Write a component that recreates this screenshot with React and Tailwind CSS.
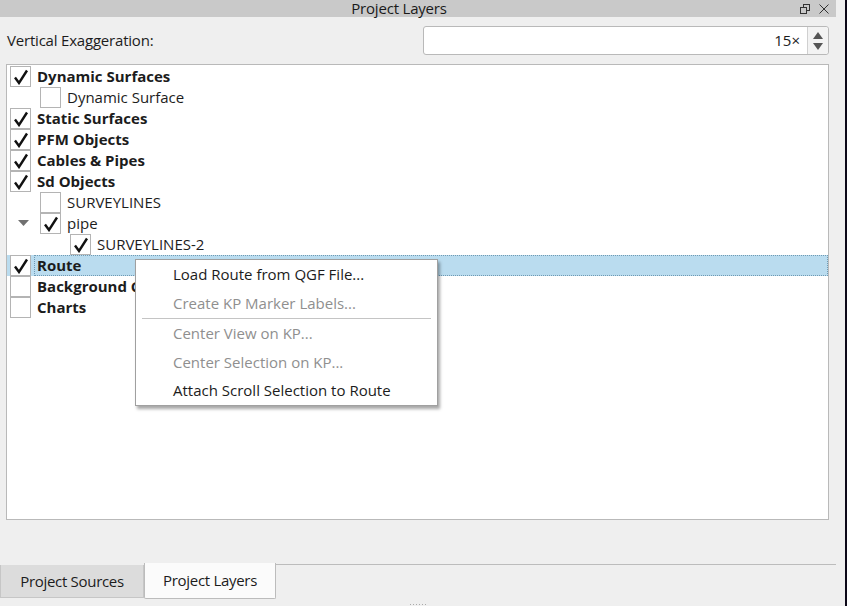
import { useState } from 'react'

const ROWS = [
  { label: 'Dynamic Surfaces', level: 0, checked: true, bold: true },
  { label: 'Dynamic Surface', level: 1, checked: false },
  { label: 'Static Surfaces', level: 0, checked: true, bold: true },
  { label: 'PFM Objects', level: 0, checked: true, bold: true },
  { label: 'Cables & Pipes', level: 0, checked: true, bold: true },
  { label: 'Sd Objects', level: 0, checked: true, bold: true },
  { label: 'SURVEYLINES', level: 1, checked: false },
  { label: 'pipe', level: 1, checked: true, expander: true },
  { label: 'SURVEYLINES-2', level: 2, checked: true },
  { label: 'Route', level: 0, checked: true, bold: true, selected: true },
  { label: 'Background Charts', level: 0, checked: false, bold: true },
  { label: 'Charts', level: 0, checked: false, bold: true },
]

const MENU = [
  { label: 'Load Route from QGF File...' },
  { label: 'Create KP Marker Labels...', disabled: true },
  { sep: true },
  { label: 'Center View on KP...', disabled: true },
  { label: 'Center Selection on KP...', disabled: true },
  { label: 'Attach Scroll Selection to Route' },
]

function CheckBox({ checked }) {
  return (
    <span className="w-[21px] h-[21px] shrink-0 border border-[#b4b4b4] bg-white flex items-center justify-center">
      {checked && (
        <svg width="16" height="16" viewBox="0 0 16 16">
          <path d="M2 8.5 L6 14 L14 1.5" fill="none" stroke="#111" strokeWidth="2.4" strokeLinejoin="miter" />
        </svg>
      )}
    </span>
  )
}

function TreeRow({ row }) {
  const indent = row.level === 0 ? 'pl-[3px]' : row.level === 1 ? 'pl-[33px]' : 'pl-[63px]'
  return (
    <div className={`relative h-[21px] flex items-center ${indent} ${row.selected ? 'bg-[#badcef]' : ''}`}>
      {row.expander && (
        <svg className="absolute left-[11px] top-[7px]" width="11" height="7" viewBox="0 0 11 7">
          <path d="M0 0 L11 0 L5.5 6 Z" fill="#707070" />
        </svg>
      )}
      <CheckBox checked={row.checked} />
      {row.selected ? (
        <span className="ml-[3px] flex-1 h-[21px] border border-dotted border-[#6f9ab3] pl-[2px] whitespace-nowrap text-[15px] leading-[19px] text-[#1c1c1c] font-bold">
          {row.label}
        </span>
      ) : (
        <span className={`ml-[6px] whitespace-nowrap text-[15px] leading-[21px] text-[#1c1c1c] ${row.bold ? 'font-bold' : ''}`}>
          {row.label}
        </span>
      )}
    </div>
  )
}

export default function App() {
  const [value] = useState(15)
  return (
    <div className="w-[847px] h-[606px] bg-[#efefef] relative overflow-hidden flex flex-col" style={{ fontFamily: '"Open Sans", "Noto Sans", sans-serif' }}>
      <div className="flex flex-1 min-h-0">
        <div className="w-[836px] flex flex-col">
          {/* title bar */}
          <div className="h-[17px] bg-[#c9c9c9] relative flex items-center justify-center pr-[38px]">
            <span className="text-[15px] leading-none text-[#1a1a1a] tracking-[-0.2px]">Project Layers</span>
            <div className="absolute right-[7px] top-0 h-[17px] flex items-center gap-[9px]">
              <svg width="10" height="10" viewBox="0 0 10 10">
                <rect x="3.5" y="0.5" width="6" height="6" fill="none" stroke="#333" />
                <rect x="0.5" y="3.5" width="6" height="6" fill="#c9c9c9" stroke="#333" />
              </svg>
              <svg width="10" height="10" viewBox="0 0 10 10">
                <path d="M0.5 0.5 L9.5 9.5 M9.5 0.5 L0.5 9.5" stroke="#333" strokeWidth="1" />
              </svg>
            </div>
          </div>

          {/* vertical exaggeration */}
          <div className="h-[47px] flex items-center pl-[7px] pr-[7px]">
            <span className="text-[15px] text-[#1c1c1c] flex-1 tracking-[-0.2px]">Vertical Exaggeration:</span>
            <div className="w-[406px] h-[29px] bg-white border border-[#b9b9b9] rounded-[3px] flex items-stretch">
              <span className="flex-1 text-right pr-[7px] text-[15px] leading-[27px] text-[#1c1c1c]">{value}×</span>
              <div className="w-[21px] border-l border-[#d0d0d0] bg-[#f3f3f3] flex flex-col items-center justify-center gap-[4px] rounded-r-[3px]">
                <svg width="10" height="7" viewBox="0 0 10 7"><path d="M0 7 L5 0 L10 7 Z" fill="#555" /></svg>
                <svg width="10" height="7" viewBox="0 0 10 7"><path d="M0 0 L5 7 L10 0 Z" fill="#555" /></svg>
              </div>
            </div>
          </div>

          {/* tree */}
          <div className="ml-[6px] mr-[7px] h-[456px] bg-white border border-[#b9b9b9] pt-[1px] relative">
            {ROWS.map(r => <TreeRow key={r.label} row={r} />)}

            {/* context menu */}
            <div className="absolute left-[128px] top-[194px] w-[303px] bg-white border border-[#a0a0a0] shadow-[2px_3px_3px_rgba(0,0,0,0.35)]">
              {MENU.map((m, i) =>
                m.sep ? (
                  <div key={i} className="h-[2px] flex items-center px-[6px]">
                    <div className="h-px w-full bg-[#c4c4c4]" />
                  </div>
                ) : (
                  <div key={i} className={`h-[28.6px] flex items-center pl-[37px] text-[15px] whitespace-nowrap ${m.disabled ? 'text-[#8f8f8f]' : 'text-[#1c1c1c]'}`}>
                    {m.label}
                  </div>
                )
              )}
            </div>
          </div>

          <div className="flex-1" />

          {/* tabs */}
          <div className="h-[43px] relative flex items-start">
            <div className="absolute left-[276px] right-0 top-[1px] h-px bg-[#bcbcbc]" />
            <div className="mt-[2px] w-[144px] h-[33px] bg-[#dcdcdc] border border-[#c6c6c6] border-t-0 flex items-center justify-center text-[15px] text-[#1c1c1c] whitespace-nowrap tracking-[-0.3px]">
              Project Sources
            </div>
            <div className="w-[132px] h-[36px] bg-[#fbfbfb] border border-[#bcbcbc] border-t-0 rounded-b-[2px] flex items-center justify-center text-[15px] text-[#1c1c1c] whitespace-nowrap tracking-[-0.3px]">
              Project Layers
            </div>
          </div>
        </div>
        <div className="w-[9px]" />
        <div className="w-[2px] bg-[#0c0818]" />
      </div>
      <div className="absolute left-[410px] bottom-[1px] flex gap-[2px]">
        {[0, 1, 2, 3, 4, 5].map(i => <span key={i} className="w-px h-px bg-[#aaa]" />)}
      </div>
    </div>
  )
}
